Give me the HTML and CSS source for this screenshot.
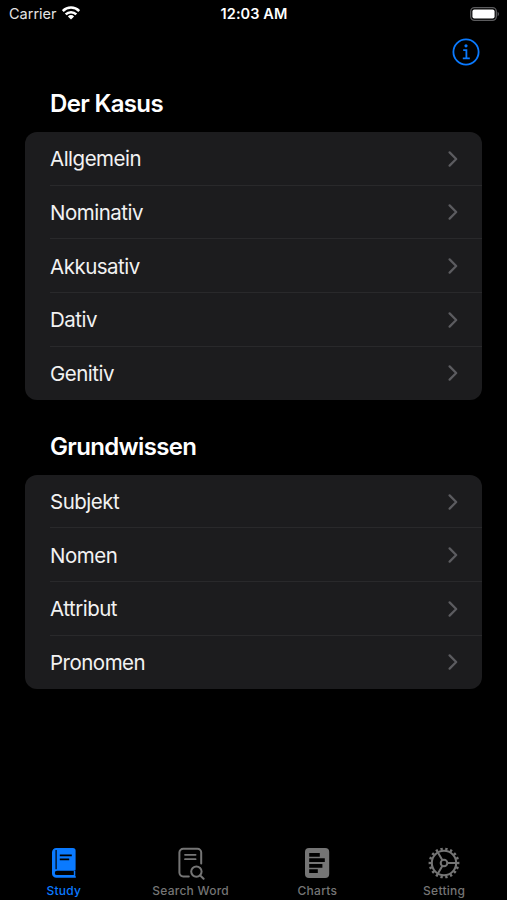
FILE: index.html
```html
<!DOCTYPE html>
<html lang="de">
  <head>
    <meta charset="utf-8">
    <title>Der Kasus</title>
    <meta name="viewport" content="width=device-width, initial-scale=1">
    <link rel="stylesheet" href="styles.css">
  </head>
  <body>
    <div class="status-bar">
      <div class="carrier">
        <span class="carrier-name">Carrier</span>
        <svg class="wifi" width="18" height="14" viewBox="0 0 18 14">
          <g fill="none" stroke="#fff" stroke-width="2.5">
            <path d="M0.8 5A11.6 11.6 0 0 1 17.2 5"/>
            <path d="M3.7 8.4A7.4 7.4 0 0 1 14.3 8.4"/>
          </g>
          <path d="M5.9 10.4A4.4 4.4 0 0 1 12.1 10.4L9 13.6Z" fill="#fff"/>
        </svg>
      </div>
      <div class="time"><span>12:03 AM</span></div>
      <div class="battery">
        <svg width="30" height="14" viewBox="0 0 30 14">
          <rect x="0.7" y="0.7" width="25.6" height="12.6" rx="3.8" fill="none" stroke="#5c5c5e" stroke-width="1.3"/>
          <rect x="2.4" y="2.4" width="22.2" height="9.2" rx="2" fill="#fff"/>
          <path d="M27.6 4.8a2.6 2.6 0 0 1 0 4.6z" fill="#5c5c5e"/>
        </svg>
      </div>
    </div>

    <div class="nav-bar">
      <a class="info" href="#">
        <svg width="28" height="28" viewBox="0 0 28 28">
          <circle cx="14" cy="14" r="12.6" fill="none" stroke="#0a7aff" stroke-width="1.8"/>
          <circle cx="14" cy="7.8" r="1.6" fill="#0a7aff"/>
          <path d="M11.2 12.1H14.4V20M10.8 20.4H17.8" fill="none" stroke="#0a7aff" stroke-width="1.8"/>
        </svg>
      </a>
    </div>

    <div class="content">
      <h2>Der Kasus</h2>
      <ul class="list">
        <li><a href="#"><span>Allgemein</span><svg class="chevron" viewBox="0 0 10 16"><path d="M1.6 1.4L8.2 8L1.6 14.6"/></svg></a></li>
        <li><a href="#"><span>Nominativ</span><svg class="chevron" viewBox="0 0 10 16"><path d="M1.6 1.4L8.2 8L1.6 14.6"/></svg></a></li>
        <li><a href="#"><span>Akkusativ</span><svg class="chevron" viewBox="0 0 10 16"><path d="M1.6 1.4L8.2 8L1.6 14.6"/></svg></a></li>
        <li><a href="#"><span>Dativ</span><svg class="chevron" viewBox="0 0 10 16"><path d="M1.6 1.4L8.2 8L1.6 14.6"/></svg></a></li>
        <li><a href="#"><span>Genitiv</span><svg class="chevron" viewBox="0 0 10 16"><path d="M1.6 1.4L8.2 8L1.6 14.6"/></svg></a></li>
      </ul>

      <h2>Grundwissen</h2>
      <ul class="list">
        <li><a href="#"><span>Subjekt</span><svg class="chevron" viewBox="0 0 10 16"><path d="M1.6 1.4L8.2 8L1.6 14.6"/></svg></a></li>
        <li><a href="#"><span>Nomen</span><svg class="chevron" viewBox="0 0 10 16"><path d="M1.6 1.4L8.2 8L1.6 14.6"/></svg></a></li>
        <li><a href="#"><span>Attribut</span><svg class="chevron" viewBox="0 0 10 16"><path d="M1.6 1.4L8.2 8L1.6 14.6"/></svg></a></li>
        <li><a href="#"><span>Pronomen</span><svg class="chevron" viewBox="0 0 10 16"><path d="M1.6 1.4L8.2 8L1.6 14.6"/></svg></a></li>
      </ul>
    </div>

    <div class="tab-bar">
      <a class="tab active" href="#">
        <svg width="32" height="34" viewBox="-0.8 0 32 34">
          <path d="M8.5 2H25.2a2.6 2.6 0 0 1 2.6 2.6V23.4a1.3 1.3 0 0 1-1.3 1.3H9.2a2.2 2.2 0 0 0 0 4.4H26V25h1.5V30.2H28V31.8H8.6A4.4 4.4 0 0 1 4.2 27.4V6.3A4.3 4.3 0 0 1 8.5 2z" fill="currentColor"/>
          <path d="M8.3 4V23.2" stroke="#000" stroke-width="1.2"/>
          <path d="M12 9.4H24M12 13.4H21.4" stroke="#000" stroke-width="1.7"/>
        </svg>
        <span>Study</span>
      </a>
      <a class="tab" href="#">
        <svg width="32" height="34" viewBox="0 0 32 34">
          <g fill="none" stroke="currentColor" stroke-width="2" stroke-linecap="round">
            <path d="M14.8 30.4H9.2A3.8 3.8 0 0 1 5.4 26.6V6.6A3.8 3.8 0 0 1 9.2 2.8H23.4A3.8 3.8 0 0 1 27.2 6.6V17.6"/>
            <path d="M11 8.8H21.6M11 13.2H21.6" stroke-width="1.8"/>
            <circle cx="22.4" cy="25.6" r="5.2"/>
            <path d="M26.2 29.5L29.6 32.8"/>
          </g>
        </svg>
        <span>Search Word</span>
      </a>
      <a class="tab" href="#">
        <svg width="32" height="34" viewBox="0 0 32 34">
          <rect x="4" y="2" width="24.2" height="30" rx="4" fill="currentColor"/>
          <path d="M8.2 8.8H18.8M8.2 14.2H23.8M8.2 19.8H21.4M8.2 25.2H16.8" stroke="#000" stroke-width="3.8"/>
        </svg>
        <span>Charts</span>
      </a>
      <a class="tab" href="#">
        <svg width="32" height="34" viewBox="0 0 32 34">
          <g fill="none" stroke="currentColor">
            <circle cx="16" cy="17" r="12.2" stroke-width="2.1"/>
            <!-- 18 teeth round the rim -->
            <circle cx="16" cy="17" r="14.1" stroke-width="2.6" pathLength="180" stroke-dasharray="4.8 5.2" stroke-dashoffset="2.4"/>
            <circle cx="16" cy="17" r="3.3" stroke-width="2"/>
            <path d="M19.3 17H28M14.3 14.1L9.9 6.5M14.3 19.9L9.9 27.5" stroke-width="2"/>
          </g>
        </svg>
        <span>Setting</span>
      </a>
    </div>
  </body>
</html>
```
FILE: styles.css
```css
* {
  box-sizing: border-box;
}

body {
  margin: 0;
  height: 900px;
  display: flex;
  flex-direction: column;
  background: #000;
  color: #fff;
  font-family: Inter, "Liberation Sans", sans-serif;
  overflow: hidden;
}

a {
  color: inherit;
  text-decoration: none;
}

/* Status bar */
.status-bar {
  height: 27px;
  padding: 0 7px 0 9px;
  display: grid;
  grid-template-columns: 1fr auto 1fr;
  align-items: center;
  font-size: 14.5px;
}

.carrier {
  display: flex;
  align-items: center;
  gap: 5px;
  color: #e4e4e4;
}

.wifi {
  margin-top: -2px;
}

.time {
  margin-left: -1px;
  font-weight: 600;
  letter-spacing: 0.1px;
}

.battery {
  display: flex;
  justify-content: flex-end;
}

/* Navigation bar */
.nav-bar {
  height: 50px;
  padding: 0 27px;
  display: flex;
  justify-content: flex-end;
  align-items: center;
}

.info,
.info svg {
  display: block;
}

/* Lists */
.content {
  flex: 1;
  padding: 0 25px 0 25.4px;
}

h2 {
  margin: 0;
  padding: 12px 24.6px 13px;
  font-size: 24px;
  line-height: 30px;
  font-weight: 600;
  letter-spacing: -0.65px;
}

.list {
  margin: 0 0 19.5px;
  padding: 0 0 0 24.6px;
  list-style: none;
  background: #1c1c1e;
  border-radius: 12px;
}

.list a {
  height: 53.65px;
  padding: 1px 24.5px 0 0;
  display: flex;
  align-items: center;
  justify-content: space-between;
  font-size: 20.5px;
  letter-spacing: -0.5px;
  color: #f2f2f2;
  border-bottom: 1px solid #29292b;
}

.list li:last-child a {
  padding-top: 0;
  border-bottom: 0;
}

.chevron {
  width: 10px;
  height: 16px;
  fill: none;
  stroke: #5c5c60;
  stroke-width: 2.2;
  stroke-linecap: round;
  stroke-linejoin: round;
}

/* Tab bar */
.tab-bar {
  height: 54px;
  display: grid;
  grid-template-columns: repeat(4, 1fr);
}

.tab {
  display: flex;
  flex-direction: column;
  align-items: center;
  color: #757575;
  font-size: 12px;
  font-weight: 500;
  letter-spacing: 0.25px;
}

.tab span {
  margin-top: 3px;
  padding-left: 1px;
  line-height: 16px;
}

.tab.active {
  color: #0a7aff;
}
```
